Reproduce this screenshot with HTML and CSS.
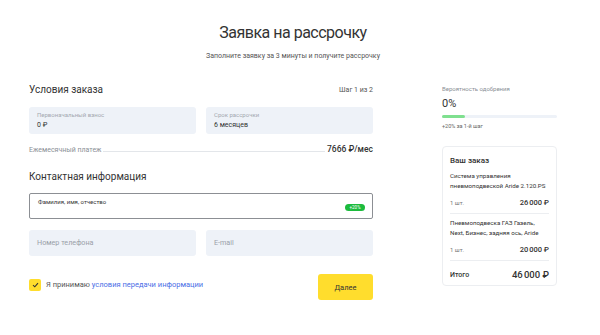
FILE: index.html
```html
<!DOCTYPE html>
<html>
<head>
<meta charset="utf-8">
<link rel="stylesheet" href="styles.css">
</head>
<body>

<div class="page">
  <h1 class="title">Заявка на рассрочку</h1>
  <p class="subtitle">Заполните заявку за 3 минуты и получите рассрочку</p>

  <div class="main">
    <div class="form">
      <div class="section-head">
        <h2>Условия заказа</h2>
        <span class="step">Шаг 1 из 2</span>
      </div>

      <div class="row">
        <div class="field">
          <div class="field-label">Первоначальный взнос</div>
          <div class="field-value">0 ₽</div>
        </div>
        <div class="field">
          <div class="field-label">Срок рассрочки</div>
          <div class="field-value">6 месяцев</div>
        </div>
      </div>

      <div class="monthly">
        <span class="monthly-label">Ежемесячный платеж</span>
        <span class="leader"></span>
        <span class="monthly-value">7666 ₽/мес</span>
      </div>

      <h2 class="contact-title">Контактная информация</h2>

      <div class="name-field">
        <div class="name-label">Фамилия, имя, отчество</div>
        <span class="badge">+20%</span>
      </div>

      <div class="row row-contacts">
        <div class="field field-empty">Номер телефона</div>
        <div class="field field-empty">E-mail</div>
      </div>

      <div class="bottom">
        <div class="agree">
          <span class="check">
            <svg width="7" height="6" viewBox="0 0 7 6"><path d="M1 3.2 L2.8 4.8 L6 1.2" fill="none" stroke="#333" stroke-width="1.1"/></svg>
          </span>
          <span class="agree-text">Я принимаю <a href="#">условия передачи информации</a></span>
        </div>
        <button class="next">Далее</button>
      </div>
    </div>

    <div class="side">
      <div class="chance-label">Вероятность одобрения</div>
      <div class="chance">0%</div>
      <div class="bar"><div class="bar-fill" style="width: 20%"></div></div>
      <div class="chance-note">+20% за 1-й шаг</div>

      <div class="order">
        <h3>Ваш заказ</h3>
        <div class="item">
          <div class="item-name">Система управления<br>пневмоподвеской Aride 2.120.PS</div>
          <div class="item-row"><span class="qty">1 шт.</span><span class="price">26&#8239;000 ₽</span></div>
        </div>
        <div class="item">
          <div class="item-name">Пневмоподвеска ГАЗ Газель,<br>Next, Бизнес, задняя ось, Aride</div>
          <div class="item-row"><span class="qty">1 шт.</span><span class="price">20&#8239;000 ₽</span></div>
        </div>
        <div class="total">
          <span>Итого</span>
          <span class="total-price">46&#8239;000 ₽</span>
        </div>
      </div>
    </div>
  </div>
</div>

</body>
</html>
```

FILE: styles.css
```css
body {
  margin: 0;
  padding: 0;
  background: #fff;
  font-family: Roboto, "Liberation Sans", sans-serif;
  color: #333;
}
.page {
  width: 528px;
  margin-left: 29px;
  padding-top: 22px;
}
.title {
  margin: 0;
  text-align: center;
  font-size: 16px;
  line-height: 22px;
  font-weight: 400;
  letter-spacing: -0.5px;
  color: #333;
}
.subtitle {
  margin: 7px 0 0;
  text-align: center;
  font-size: 7px;
  line-height: 10px;
  color: #555;
}
.main {
  display: flex;
  gap: 69px;
  margin-top: 22px;
}
.form {
  width: 344px;
}
.section-head {
  display: flex;
  justify-content: space-between;
  align-items: center;
  height: 14px;
}
h2 {
  margin: 0;
  font-size: 10px;
  line-height: 14px;
  font-weight: 400;
  color: #333;
}
.step {
  font-size: 7px;
  color: #555;
}
.row {
  display: flex;
  gap: 10px;
  margin-top: 10px;
}
.field {
  flex: 1;
  height: 27px;
  box-sizing: border-box;
  padding: 4px 8px;
  background: #eef2f8;
  border-radius: 3px;
}
.field-label {
  font-size: 6px;
  line-height: 8px;
  color: #a4a9b0;
}
.field-value {
  margin-top: 2px;
  font-size: 7px;
  line-height: 9px;
  color: #333;
}
.monthly {
  display: flex;
  align-items: baseline;
  margin-top: 9px;
  height: 12px;
  line-height: 12px;
}
.monthly-label {
  font-size: 7px;
  color: #8a8f96;
}
.leader {
  flex: 1;
  margin: 0 2px;
  border-bottom: 1px solid #e3e6ea;
}
.monthly-value {
  font-size: 8.5px;
  font-weight: 500;
  color: #333;
}
.contact-title {
  margin-top: 15px;
}
.name-field {
  position: relative;
  margin-top: 9px;
  height: 26px;
  box-sizing: border-box;
  padding: 4px 8px;
  border: 1px solid #8c8f94;
  border-radius: 2px;
}
.name-label {
  font-size: 6px;
  line-height: 8px;
  color: #333;
}
.badge {
  position: absolute;
  right: 7px;
  top: 10px;
  width: 20px;
  height: 7px;
  line-height: 7px;
  border-radius: 4px;
  background: #1cbb3d;
  color: #fff;
  font-size: 4.5px;
  text-align: center;
}
.row-contacts {
  margin-top: 11px;
}
.field-empty {
  height: 26px;
  line-height: 26px;
  padding: 0 8px;
  font-size: 7.2px;
  color: #9aa0a8;
}
.bottom {
  display: flex;
  justify-content: space-between;
  align-items: flex-start;
  margin-top: 18px;
}
.agree {
  display: flex;
  align-items: center;
  margin-top: 5px;
}
.agree-text {
  font-size: 7.5px;
  line-height: 12px;
  color: #555;
  white-space: nowrap;
}
.check {
  display: flex;
  align-items: center;
  justify-content: center;
  width: 12px;
  height: 12px;
  margin-right: 5px;
  border-radius: 2px;
  background: #ffdd2d;
}
.agree a {
  color: #4a6ee6;
  text-decoration: none;
}
.next {
  width: 55px;
  height: 26px;
  border: none;
  border-radius: 3px;
  background: #ffdd2d;
  font-family: inherit;
  font-size: 7.5px;
  color: #333;
}
.side {
  width: 115px;
  padding-top: 2px;
}
.chance-label {
  font-size: 6px;
  line-height: 8px;
  color: #8a8f96;
}
.chance {
  margin-top: 4px;
  font-size: 11px;
  line-height: 13px;
  color: #333;
}
.bar {
  margin-top: 5px;
  height: 3px;
  border-radius: 2px;
  background: #eef2f8;
}
.bar-fill {
  height: 3px;
  border-radius: 2px;
  background: #7fe08f;
}
.chance-note {
  margin-top: 4px;
  font-size: 5.5px;
  line-height: 8px;
  color: #666;
}
.order {
  margin-top: 16px;
  height: 140px;
  box-sizing: border-box;
  padding: 8px 7px 5px;
  border: 1px solid #eceef1;
  border-radius: 4px;
}
.order h3 {
  margin: 0;
  font-size: 8px;
  line-height: 12px;
  font-weight: 500;
  color: #333;
}
.item {
  padding: 5px 0 5px;
  border-bottom: 1px solid #eceef1;
}
.item-name {
  font-size: 6.2px;
  line-height: 9.5px;
  color: #333;
}
.item-row {
  display: flex;
  justify-content: space-between;
  align-items: center;
  margin-top: 7px;
  line-height: 10px;
}
.qty {
  font-size: 6px;
  color: #777;
}
.price {
  font-size: 7.5px;
  font-weight: 500;
  color: #333;
}
.total {
  display: flex;
  justify-content: space-between;
  align-items: center;
  margin-top: 7px;
  line-height: 14px;
  font-size: 7px;
  font-weight: 500;
}
.total-price {
  font-size: 9.5px;
}
```
